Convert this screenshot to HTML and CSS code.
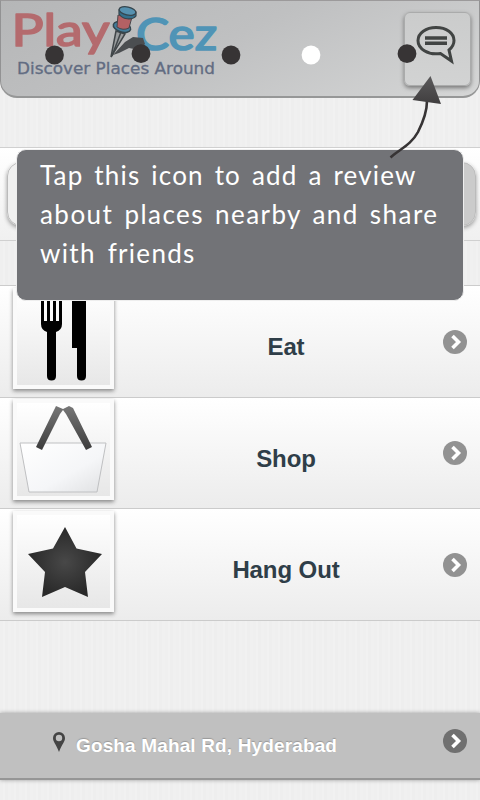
FILE: index.html
```
<!DOCTYPE html>
<html lang="en">
<head>
<meta charset="utf-8">
<title>PlayCez</title>
<link rel="stylesheet" href="styles.css">
</head>
<body>
<div class="screen">
  <header class="header">
    <svg class="logo" width="226" height="90" viewBox="0 0 226 90">
      <g class="brand">
        <text class="play" x="11.5" y="46" font-size="45" textLength="98" lengthAdjust="spacingAndGlyphs">Play</text>
        <text class="cez" x="136" y="50" font-size="44" textLength="81" lengthAdjust="spacingAndGlyphs">Cez</text>
      </g>
      <path d="M113 55 125 42l8-5 10 1 2 6-6 6-10-2-10 5z" fill="#4b4e51"/>
      <path d="M116 31 111 57 125 34z" fill="#999c9e" stroke="#414649" stroke-width="1.5"/>
      <path d="M121 32 112 56" stroke="#41474a" stroke-width="1.5"/>
      <ellipse cx="122" cy="27" rx="9" ry="5" transform="rotate(17 122 27)" fill="#437d9b" stroke="#35454d" stroke-width="1.5"/>
      <path d="M118 15 117 27q6 4 12 1l3-11z" fill="#b46164" stroke="#48464b"/>
      <path d="M119 10v4c3 5 13 7 17 2v-4z" fill="#346f8c" stroke="#35454d" stroke-width="1.2"/>
      <ellipse cx="127.500" cy="11" rx="8.500" ry="4" transform="rotate(12 127.500 11)" fill="#5591b0" stroke="#35454d" stroke-width="1.3"/>
      <text class="tagline" x="17" y="74" font-size="15.500" textLength="198" lengthAdjust="spacingAndGlyphs">Discover Places Around</text>
    </svg>
    <div class="review">
      <svg width="42" height="42" viewBox="0 0 42 42" fill="none" stroke="#414443">
        <path d="M20 3.500c10.500 0 18 5.500 18 13 0 4-2 7-5 9.500l2.500 11-11-7.500c-13 2-22.500-5-22.500-13 0-7.500 8-13 18-13z" stroke-width="3"/>
        <path d="M9 14h22M9 19.300h22" stroke-width="3.600"/>
      </svg>
    </div>
  </header>
  <section class="search"><div class="field"></div></section>
  <main class="list">
    <div class="row">
      <div class="tile"><svg width="93" height="93" viewBox="0 0 93 93">
        <path d="M24 5v27q0 6 6 8v44q0 4.500 4.500 4.500T39 84V40q6-2 6-8V5h-3v24h-3V5h-3v24h-3V5h-3v24h-3V5zM55 5h14v79q0 4.500-4.500 4.500T60 84V56h-5z"/>
      </svg></div>
      <span class="label">Eat</span>
      <svg class="chevron" width="24" height="24" viewBox="0 0 24 24"><circle cx="12" cy="12" r="12"/><path d="m9.500 6 6 6-6 6"/></svg>
    </div>
    <div class="row">
      <div class="tile"><svg width="93" height="93" viewBox="0 0 93 93">
        <defs>
          <linearGradient id="bag" x2="1" y2="1"><stop stop-color="#fff"/><stop offset=".6" stop-color="#f5f6f8"/><stop offset="1" stop-color="#dfe0e2"/></linearGradient>
          <linearGradient id="handle" x2="0" y2="1"><stop stop-color="#777"/><stop offset="1" stop-color="#3c3c3c"/></linearGradient>
        </defs>
        <path d="M3 40h86l-9 49H12z" fill="url(#bag)" stroke="#bfc0c2"/>
        <path d="m39 3 7 3 6-3 4 2 19 39-6 3L49 11l-3-4-3 4-18 36-6-3z" fill="url(#handle)"/>
      </svg></div>
      <span class="label">Shop</span>
      <svg class="chevron" width="24" height="24" viewBox="0 0 24 24"><circle cx="12" cy="12" r="12"/><path d="m9.500 6 6 6-6 6"/></svg>
    </div>
    <div class="row">
      <div class="tile"><svg width="93" height="93" viewBox="0 0 93 93">
        <defs><radialGradient id="star"><stop stop-color="#484848"/><stop offset="1" stop-color="#292929"/></radialGradient></defs>
        <path d="m48 12 11.500 21.500L85 39 68 57l3 25-23-10-23 10 3-25-17-18 25-5.500z" fill="url(#star)"/>
      </svg></div>
      <span class="label">Hang Out</span>
      <svg class="chevron" width="24" height="24" viewBox="0 0 24 24"><circle cx="12" cy="12" r="12"/><path d="m9.500 6 6 6-6 6"/></svg>
    </div>
  </main>
  <footer class="location">
    <svg class="pin" width="12" height="20" viewBox="0 0 12 20"><path fill-rule="evenodd" d="M6 0a6 6 0 0 1 6 6c0 4-3 6-6 14C3 12 0 10 0 6a6 6 0 0 1 6-6zm0 2.800a3.200 3.200 0 1 0 0 6.400 3.200 3.200 0 0 0 0-6.400z" fill="#444"/></svg>
    <span class="address">Gosha Mahal Rd, Hyderabad</span>
    <svg class="chevron dark" width="24" height="24" viewBox="0 0 24 24"><circle cx="12" cy="12" r="12"/><path d="m9.500 6 6 6-6 6"/></svg>
  </footer>

  <div class="tooltip">
    <span class="line one">Tap this icon to add a review</span>
    <span class="line two">about places nearby and share</span>
    <span class="line three">with friends</span>
  </div>
  <svg class="overlay" width="480" height="170" viewBox="0 0 480 170">
    <defs><linearGradient id="tip" x2="0" y2="1"><stop stop-color="#5b5a5b"/><stop offset="1" stop-color="#403e3f"/></linearGradient></defs>
    <g fill="#373435">
      <circle cx="54.500" cy="55" r="9.400"/><circle cx="141" cy="53.700" r="9.400"/><circle cx="231" cy="55" r="9.400"/>
      <circle cx="311" cy="55" r="9.400" fill="#fff"/><circle cx="407" cy="53.700" r="9.400"/>
    </g>
    <path d="M390.500 157.500C400 149 411 145 418 132q9-18 9-31" fill="none" stroke="#373435" stroke-width="2.600"/>
    <path d="m430.500 76 10.500 28-28.500-4z" fill="url(#tip)"/>
  </svg>
</div>
</body>
</html>
```
FILE: styles.css
```
* { box-sizing: border-box; }
body { margin: 0; }
.screen {
  position: relative;
  display: flex;
  flex-direction: column;
  width: 480px;
  height: 800px;
  overflow: hidden;
  font-family: "Liberation Sans", sans-serif;
  background: repeating-linear-gradient(90deg, #efefef 0 3px, #f1f1f1 3px 5px, #eeeeee 5px 8px, #f0f0f0 8px 11px);
}
.header {
  display: flex;
  justify-content: space-between;
  height: 98px;
  border: 1px solid #929293;
  border-top-color: #9c9a9b;
  border-bottom: 2px solid #969797;
  border-radius: 0 0 17px 17px;
  background: linear-gradient(155deg, #b5b6b7, #bfc0c1 45%, #d5d6d6);
}
.logo { display: block; margin: -1px 0 0 -1px; }
.brand text {
  font-family: Lato, sans-serif;
  font-weight: 400;
  stroke-width: 1.7;
  stroke-linejoin: round;
}
.play { fill: #b46b6e; stroke: #b46b6e; }
.cez { fill: #5094b6; stroke: #5094b6; }
.tagline { font-family: "DejaVu Sans", sans-serif; fill: #626c82; stroke: #626c82; stroke-width: .3; }
.review {
  width: 67px;
  height: 74px;
  margin: 11px 8px 0 0;
  padding: 11px 0 0 11px;
  border: 1px solid #aaabab;
  border-radius: 6px;
  background: linear-gradient(#cbcccc, #d2d3d3);
  box-shadow: 0 2px 4px #777;
}
.search {
  height: 94px;
  margin-top: 49px;
  padding: 14px 4px 0 7px;
  border: 1px solid #d0d0d0;
  border-width: 1px 0;
  background: linear-gradient(#fff, #f0f0f0);
}
.field {
  height: 64px;
  border: 1px solid #bbb;
  border-radius: 14px;
  background: linear-gradient(90deg, #f0f0f0 50%, #cbcbcb 50%);
  box-shadow: 0 2px 4px #999;
}
.list { margin-top: 44px; border-top: 1px solid #ccc; }
.row {
  display: flex;
  align-items: center;
  height: 111.5px;
  padding: 1px 13px 0;
  border-bottom: 1px solid #cbcbcb;
  background: linear-gradient(#fff, #ececec);
}
.tile {
  width: 101px;
  height: 101px;
  margin-bottom: 7px;
  padding: 4px;
  background: linear-gradient(#fff, #e7e7e7) content-box, #fafafa;
  box-shadow: 0 2px 4px #888;
}
.tile svg { display: block; }
.label {
  flex: 1;
  padding: 11px 0 0 15px;
  text-align: center;
  font-size: 24px;
  font-weight: 700;
  letter-spacing: -.1px;
  color: #2f3e48;
}
.chevron { flex: none; }
.chevron circle { fill: #929292; }
.chevron path { fill: none; stroke: #fff; stroke-width: 3.6; }
.chevron.dark circle { fill: #707070; }
.location {
  display: flex;
  align-items: center;
  height: 67px;
  margin-top: 92px;
  padding: 0 13px 0 53px;
  background: #c0c0c0;
  border-bottom: 2px solid #969696;
  box-shadow: 0 0 4px #999;
}
.pin { margin-bottom: 7px; }
.address {
  flex: 1;
  margin-left: 11px;
  padding-top: 2px;
  font-size: 19px;
  font-weight: 700;
  letter-spacing: .14px;
  white-space: nowrap;
  color: #fff;
  text-shadow: 0 -1px 1px #999;
}
.location .chevron { margin-bottom: 8px; }
.tooltip {
  position: absolute;
  left: 16px;
  top: 149px;
  width: 448px;
  height: 152px;
  padding: 6px 0 0 23px;
  border: 1px solid #eee;
  border-radius: 10px;
  background: #727377;
  color: #fff;
  font: 400 26px/39px Lato, sans-serif;
}
.line { display: block; white-space: nowrap; }
.one { letter-spacing: 1.2px; word-spacing: 3px; }
.two { letter-spacing: 1.45px; word-spacing: 3px; }
.three { letter-spacing: 1.3px; word-spacing: 4px; }
.overlay { position: absolute; left: 0; top: 0; }
```
